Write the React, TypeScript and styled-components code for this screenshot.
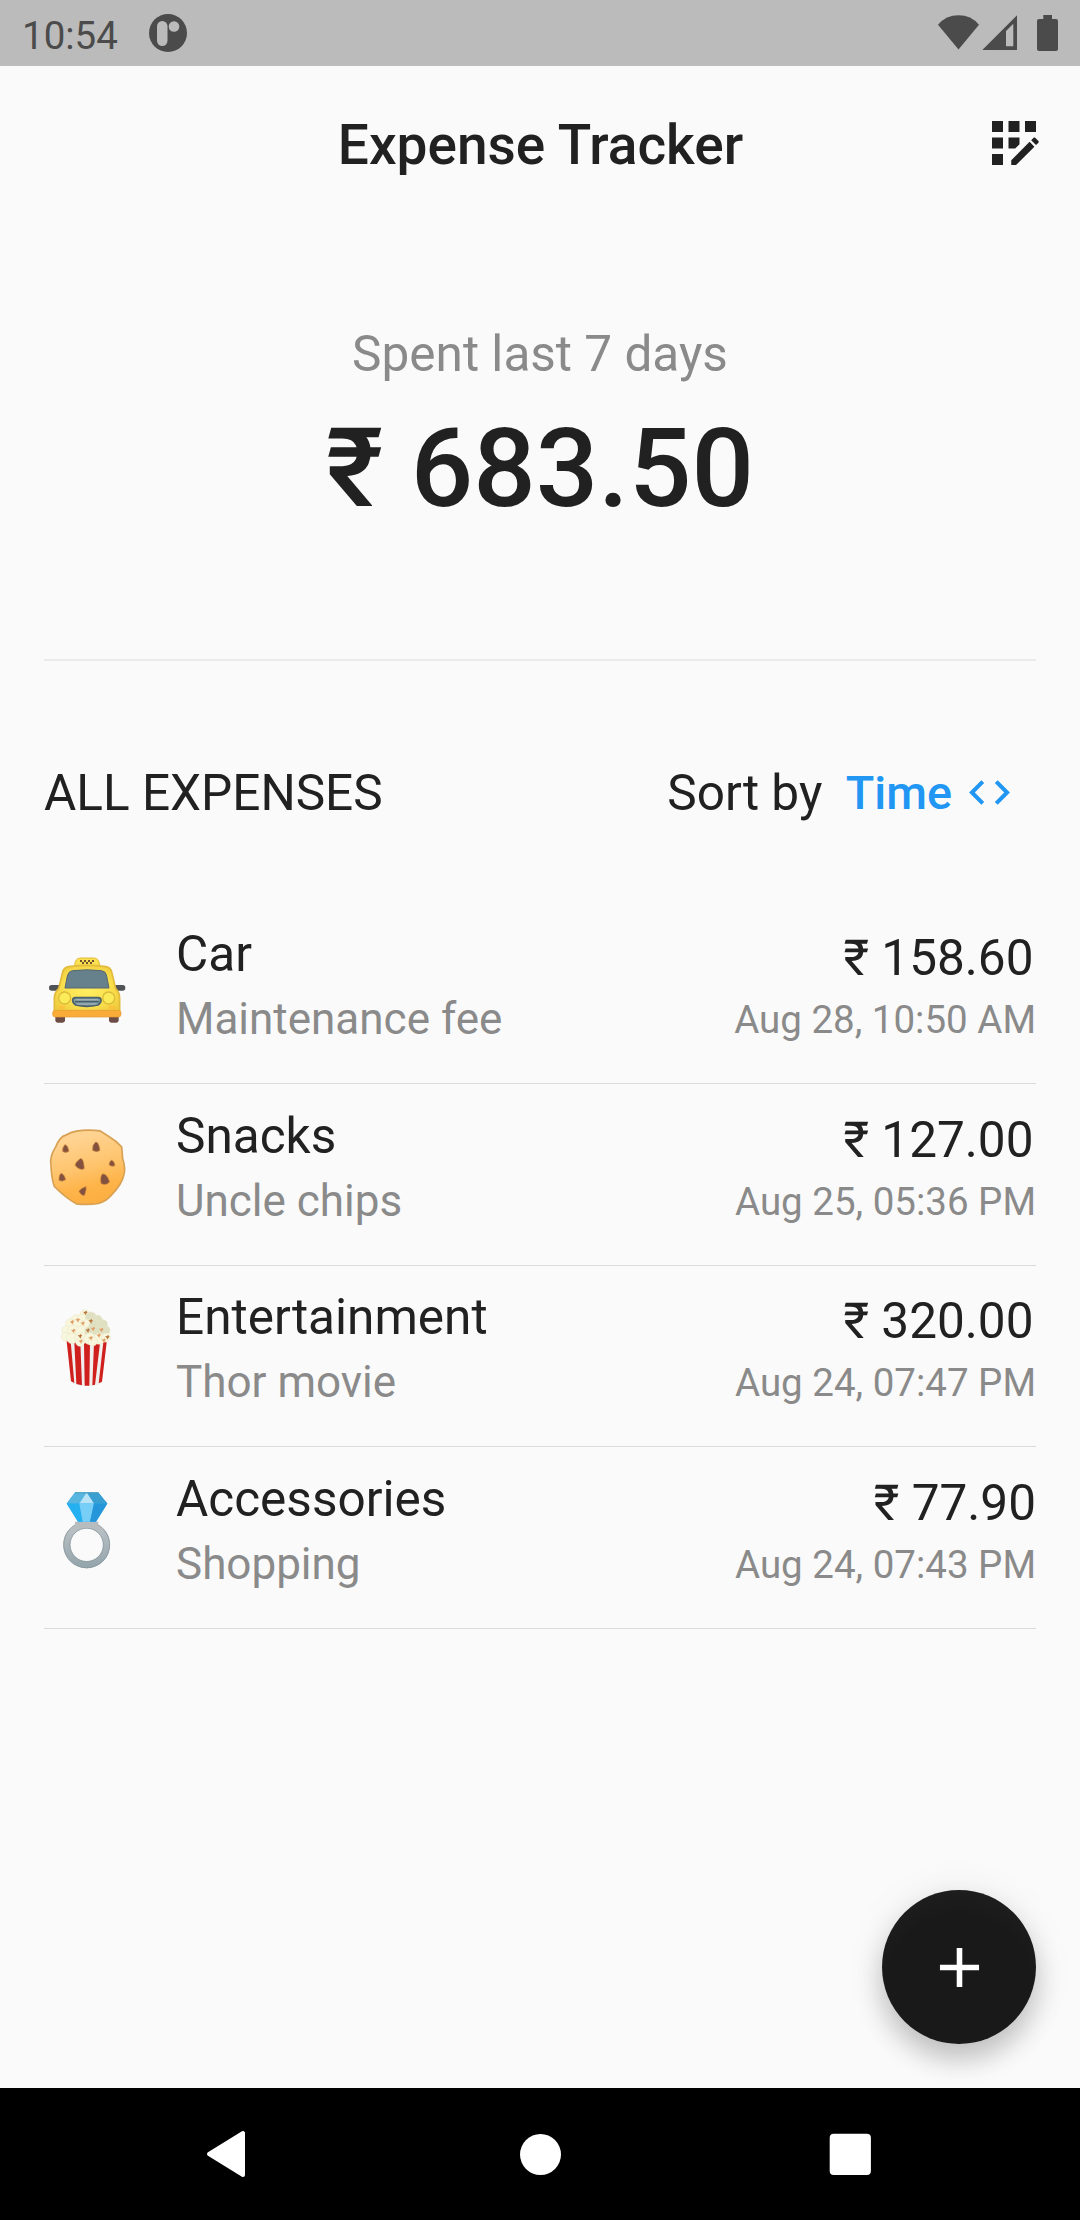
import React from 'react';
import styled, { createGlobalStyle } from 'styled-components';

const GlobalStyle = createGlobalStyle`
  * { box-sizing: border-box; }
  body { margin: 0; background: #fafafa; }
`;

const Screen = styled.div`
  width: 1080px;
  height: 2220px;
  display: flex;
  flex-direction: column;
  position: relative;
  overflow: hidden;
  background: #fafafa;
  color: #212121;
  font-family: Roboto, "Noto Sans", sans-serif;
  font-weight: 400;
  white-space: nowrap;
`;

const StatusBar = styled.header`
  height: 66px;
  flex: none;
  display: flex;
  align-items: center;
  background: #bbbbbb;
  color: #4b4b4b;
  padding: 0 20px 0 22px;
`;

const Clock = styled.span`
  font-size: 38.5px;
  line-height: 45px;
  padding-top: 4px;
  width: 127px;
`;

const StatusIcons = styled.div`
  margin-left: auto;
  display: flex;
`;

const AppBar = styled.div`
  height: 154px;
  flex: none;
  display: grid;
  grid-template-columns: 132px 1fr 132px;
  align-items: center;
`;

const Title = styled.h1`
  margin: 0;
  padding-top: 3px;
  padding-left: 1px;
  text-align: center;
  font-size: 55px;
  line-height: 64px;
  font-weight: 500;
`;

const ActionButton = styled.button`
  border: 0;
  background: none;
  padding: 0;
  display: flex;
  justify-content: center;
  color: #212121;
  height: 66px;
`;

const Summary = styled.section`
  height: 441px;
  flex: none;
  margin: 0 44px;
  padding-top: 105px;
  text-align: center;
  border-bottom: 2px solid #ebebeb;
`;

const SummaryLabel = styled.div`
  font-size: 49.5px;
  line-height: 58px;
  color: #8a8a8a;
`;

const SummaryAmount = styled.div`
  font-size: 110px;
  line-height: 129px;
  margin-top: 21px;
  font-weight: 500;
`;

const ListHeader = styled.div`
  flex: none;
  display: flex;
  align-items: center;
  height: 132px;
  margin: 66px 44px 43.5px;
  font-size: 49.5px;
  line-height: 58px;
`;

const ListTitle = styled.h2`
  margin: 0;
  font-size: inherit;
  font-weight: 400;
`;

const SortLabel = styled.span`
  margin-left: auto;
  margin-right: 23.5px;
`;

const SortButton = styled.button`
  border: 0;
  background: none;
  padding: 0 22px 0 0;
  display: flex;
  align-items: center;
  gap: 13px;
  color: #2196f3;
  font: 500 46.75px/58px Roboto, sans-serif;

  svg {
    margin-bottom: 2px;
  }
`;

const List = styled.ul`
  list-style: none;
  margin: 0 44px;
  padding: 0;
  flex: 1;
`;

const Row = styled.li`
  height: 181.5px;
  display: flex;
  border-bottom: 1px solid #dbdbdb;
`;

const Emoji = styled.div`
  width: 132px;
  padding-top: 27.5px;
`;

const Detail = styled.div`
  flex: 1;
  padding-top: 22.5px;
`;

const Category = styled.div`
  font-size: 49.5px;
  line-height: 58px;
`;

const Note = styled.div`
  font-size: 44px;
  line-height: 52px;
  margin-top: 10px;
  color: #8a8a8a;
`;

const Values = styled.div`
  text-align: right;
  padding-top: 26.5px;
`;

const Amount = styled.div<{ $inset: number }>`
  font-size: 49.5px;
  line-height: 58px;
  padding-right: ${(p) => p.$inset}px;
`;

const Stamp = styled.div`
  font-size: 38.5px;
  line-height: 45px;
  margin-top: 10px;
  color: #8a8a8a;
`;

const Fab = styled.button`
  position: absolute;
  right: 44px;
  bottom: 176px;
  width: 154px;
  height: 154px;
  border: 0;
  padding: 0;
  border-radius: 50%;
  display: flex;
  align-items: center;
  justify-content: center;
  background: radial-gradient(circle at 50% 64%, #191919 0, #191919 58%, #212121 95%);
  box-shadow: 0 16px 27px rgba(0, 0, 0, 0.2), 0 3px 42px rgba(0, 0, 0, 0.08);
`;

const NavBar = styled.nav`
  height: 132px;
  flex: none;
  background: #000;
  display: grid;
  grid-template-columns: repeat(3, 310px);
  justify-content: center;
  align-items: center;
  justify-items: center;
`;

const Drawing = styled.svg`
  display: block;
  margin-left: -14px;
`;

const Taxi = () => (
  <Drawing width="120" height="120" viewBox="0 0 360 360">
    <defs>
      <radialGradient id="taxiBody" cx=".5" cy=".5" r=".6">
        <stop offset="0" stopColor="#ffef62" />
        <stop offset=".6" stopColor="#fbe04d" />
        <stop offset="1" stopColor="#eecb3e" />
      </radialGradient>
    </defs>
    <rect x="57" y="165" width="40" height="17" rx="8" fill="#4f5355" />
    <rect x="246" y="165" width="40" height="17" rx="8" fill="#4f5355" />
    <path d="M76 252h29v19q0 7-7 7H83q-7 0-7-7z" fill="#6d4c46" />
    <path d="M237 252h29v19q0 7-7 7h-15q-7 0-7-7z" fill="#6d4c46" />
    <path d="M134 110q0-26 17-26h40q18 0 18 26z" fill="#fbe04f" stroke="#e3bb3c" strokeWidth="3" />
    <path d="M150 90h6v6h-6zM162 90h6v6h-6zM174 90h6v6h-6zM186 90h6v6h-6zM156 96h6v6h-6zM168 96h6v6h-6zM180 96h6v6h-6z" fill="#70502f" />
    <path d="M73 250V207q0-20 13-31l12-50q3-13 18-16 55-8 112 0 14 3 17 16l12 50q12 11 12 31v43z" fill="url(#taxiBody)" stroke="#e3bb3c" strokeWidth="5" />
    <path d="M105 174l7-36q3-14 15-16 44-5 88 0 13 2 15 16l7 36z" fill="#66808c" stroke="#55676f" strokeWidth="3" />
    <circle cx="104" cy="204" r="18" fill="#fceb58" stroke="#dbbb3a" strokeWidth="4" />
    <circle cx="236" cy="204" r="18" fill="#fceb58" stroke="#dbbb3a" strokeWidth="4" />
    <path d="M136 203h69q8 0 8 8 0 9-9 14-34 8-67 0-9-5-9-14 0-8 8-8z" fill="#7f979f" stroke="#4b626c" strokeWidth="5" />
    <path d="M135 215h71" stroke="#465d67" strokeWidth="4" />
    <path d="M138 209h65M141 222h59" stroke="#a9b8bd" strokeWidth="3" />
    <path d="M86 227h19v10H86zM237 227h19v10h-19z" fill="#fbc23c" />
    <rect x="68" y="241" width="205" height="20" rx="8" fill="#f9ad38" stroke="#e29a30" strokeWidth="2" />
  </Drawing>
);

const chips = [
  'M98 123q-2-11 6-20 8-2 13 19-9 7-19 1z',
  'M188 120q-2-16 8-25 10-3 14 25-10 7-22 0z',
  'M136 166q-3-8 15-22 10-2 12 30-12 8-27-8z',
  'M237 163q1-12 8-14 9 4 10 16-9 6-18-2z',
  'M87 210q-1-18 7-22 10 4 13 19-8 8-20 3z',
  'M213 219q-4-22 5-29 13 0 21 24-10 13-26 5z',
  'M147 243q3-9 21-15 2 9-4 26-8 4-17-11z',
];

const Cookie = () => (
  <Drawing width="120" height="120" viewBox="0 4.5 360 360">
    <defs>
      <linearGradient id="cookieFill" x1=".35" y1="0" x2=".6" y2="1">
        <stop offset=".1" stopColor="#ffd391" />
        <stop offset=".5" stopColor="#fec46d" />
        <stop offset=".75" stopColor="#feb44a" />
        <stop offset="1" stopColor="#fcae40" />
      </linearGradient>
    </defs>
    <path d="M139 62Q173 56 210 61L240 80Q257 90 275 109L278 145Q288 175 281 195C277 214 263 234 246 252Q230 272 205 279Q174 284 139 280Q108 263 73 228Q64 203 63 163Q58 139 77 109Q90 78 107 74Q122 65 139 62z" fill="url(#cookieFill)" stroke="#d8a052" strokeWidth="5" />
    {chips.map((d) => <path key={d} d={d} fill="#83513f" stroke="#d78c3c" strokeWidth="2" />)}
  </Drawing>
);

const puffs = [
  [165, 73, 14], [138, 88, 14], [155, 87, 15], [183, 82, 16], [203, 90, 14], [122, 101, 15], [145, 104, 17], [170, 105, 17], [195, 107, 18], [218, 104, 15],
  [110, 121, 14], [130, 122, 17], [155, 125, 18], [182, 126, 18], [207, 128, 18], [228, 121, 12], [107, 140, 13], [126, 145, 16], [152, 145, 18], [180, 146, 18], [207, 146, 17], [228, 142, 13], [150, 156, 13], [188, 154, 14],
];
const kernels = [
  [166, 69], [143, 91], [126, 97], [182, 94], [158, 101], [130, 123], [173, 122], [189, 117], [214, 120], [150, 139], [206, 137], [182, 145], [232, 142], [152, 155], [221, 152],
];

const Popcorn = () => (
  <Drawing width="120" height="120" viewBox="0 9 360 360">
    <path d="M109 150H231L216 276Q212 288 172 288T126 276z" fill="#f0efed" />
    <path
      d="M110 154h12l11 125-10-5zM133 158h18l5 128-17-4zM162 160h18l-2 127h-14zM192 160h18l-15 124-8 2zM220 157h10l-14 118-10 5z"
      fill="#cf201e"
    />
    {puffs.map(([x, y, r], i) => (
      <circle key={i} cx={x} cy={y} r={r} fill={x > 175 && y < 130 ? '#dfdfc1' : '#f8f6dc'} stroke="#e6e5c6" strokeWidth="1.5" />
    ))}
    {kernels.map(([x, y], i) => (
      <path key={i} d={`M${x - 7} ${y - 4}l5 1 4-4 5 5-4 3-1 6-4-5z`} fill={i % 3 ? '#e0a068' : '#b8783f'} />
    ))}
  </Drawing>
);

const Ring = () => (
  <Drawing width="120" height="120" viewBox="0 13.5 360 360">
    <defs>
      <linearGradient id="ringBand" x1="0" y1="0" x2="0" y2="1">
        <stop offset="0" stopColor="#bcc3c6" />
        <stop offset="1" stopColor="#96a6ad" />
      </linearGradient>
    </defs>
    <circle cx="170" cy="223" r="60" fill="none" stroke="url(#ringBand)" strokeWidth="20" />
    <circle cx="170" cy="223" r="69" fill="none" stroke="#87979e" strokeWidth="2.5" />
    <circle cx="170" cy="223" r="50" fill="none" stroke="#83949c" strokeWidth="2.5" />
    <path d="M135 154h70v11l15 9-17 7q-33-20-66 0l-17-7 15-9z" fill="#b7bdbf" />
    <path d="M135 66h70l27 33-34 55h-54l-34-55z" fill="#35adea" />
    <path d="M135 66h35l-22 33h-38z" fill="#57b5df" />
    <path d="M205 66h-35l22 33h40z" fill="#399fd1" />
    <path d="M170 66l22 33h-44z" fill="#b9e3f7" />
    <path d="M110 99h38l10 55h-14z" fill="#25b0f2" />
    <path d="M148 99h44l-12 55h-22z" fill="#77cff8" />
    <path d="M192 99h40l-34 55h-18z" fill="#2596d9" />
    <path d="M135 67h70" stroke="#4c9dbb" strokeWidth="3" />
  </Drawing>
);

const expenses = [
  { icon: <Taxi />, name: 'Car', note: 'Maintenance fee', amount: '₹ 158.60', time: 'Aug 28, 10:50 AM', inset: 2.5 },
  { icon: <Cookie />, name: 'Snacks', note: 'Uncle chips', amount: '₹ 127.00', time: 'Aug 25, 05:36 PM', inset: 2.5 },
  { icon: <Popcorn />, name: 'Entertainment', note: 'Thor movie', amount: '₹ 320.00', time: 'Aug 24, 07:47 PM', inset: 2.5 },
  { icon: <Ring />, name: 'Accessories', note: 'Shopping', amount: '₹ 77.90', time: 'Aug 24, 07:43 PM', inset: 0 },
];

export default function App() {
  return (
    <Screen>
      <GlobalStyle />
      <StatusBar>
        <Clock>10:54</Clock>
        <svg width="38" height="38" viewBox="0 0 38 38">
          <circle cx="19" cy="19" r="19" fill="#4b4b4b" />
          <rect x="8" y="7" width="10.5" height="25" rx="5.2" fill="#bbbbbb" />
          <circle cx="25" cy="12.5" r="5.3" fill="#bbbbbb" />
        </svg>
        <StatusIcons>
          <svg width="122" height="36" viewBox="0 0 122 36" fill="#4b4b4b">
            <path d="M0 9.7Q8 .3 20.5 .3T41 9.7L20.500 34.500z" />
            <path fillRule="evenodd" d="M44.300 35L79 .3V35zM68 16V31.300h7.300V8.700z" />
            <path d="M105.300 0h8.700v4h4q2 0 2 2v28q0 2-2 2h-17q-2 0-2-2V6q0-2 2-2h4.300z" />
          </svg>
        </StatusIcons>
      </StatusBar>
      <AppBar>
        <span />
        <Title>Expense Tracker</Title>
        <ActionButton aria-label="Edit categories">
          <svg width="66" height="66" viewBox="0 0 24 24" fill="currentColor">
            <path d="M4 4h4v4H4zM10 4h4v4h-4zM16 4h4v4h-4zM4 10h4v4H4zM4 16h4v4H4zM14 12.420V10h-4v4h2.420zM20.880 11.290l-1.170-1.170c-.16-.16-.42-.16-.58 0l-.88.88L20 12.750l.88-.88c.16-.16.16-.42 0-.58zM11 18.250V20h1.750l6.670-6.670-1.750-1.750z" />
          </svg>
        </ActionButton>
      </AppBar>
      <Summary>
        <SummaryLabel>Spent last 7 days</SummaryLabel>
        <SummaryAmount>₹ 683.50</SummaryAmount>
      </Summary>
      <ListHeader>
        <ListTitle>ALL EXPENSES</ListTitle>
        <SortLabel>Sort by</SortLabel>
        <SortButton>
          Time
          <svg width="49" height="49" viewBox="0 0 24 24" fill="currentColor">
            <path d="M9.400 16.600L4.800 12l4.600-4.600L8 6l-6 6 6 6zM14.600 16.600l4.600-4.600-4.600-4.600L16 6l6 6-6 6z" />
          </svg>
        </SortButton>
      </ListHeader>
      <List>
        {expenses.map((e) => (
          <Row key={e.name}>
            <Emoji>{e.icon}</Emoji>
            <Detail>
              <Category>{e.name}</Category>
              <Note>{e.note}</Note>
            </Detail>
            <Values>
              <Amount $inset={e.inset}>{e.amount}</Amount>
              <Stamp>{e.time}</Stamp>
            </Values>
          </Row>
        ))}
      </List>
      <Fab aria-label="Add expense">
        <svg width="67" height="67" viewBox="0 0 24 24" fill="#fff">
          <path d="M19 13h-6v6h-2v-6H5v-2h6V5h2v6h6z" />
        </svg>
      </Fab>
      <NavBar>
        <svg width="48" height="48" viewBox="0 0 48 48"><path d="M37 3v42L3 24z" fill="#fff" stroke="#fff" strokeWidth="4" strokeLinejoin="round" /></svg>
        <svg width="41" height="41" viewBox="0 0 41 41"><circle cx="20.500" cy="20.500" r="20.500" fill="#fff" /></svg>
        <svg width="42" height="42" viewBox="0 0 42 42"><rect x=".7" y=".8" width="41.200" height="41.200" rx="4" fill="#fff" /></svg>
      </NavBar>
    </Screen>
  );
}
